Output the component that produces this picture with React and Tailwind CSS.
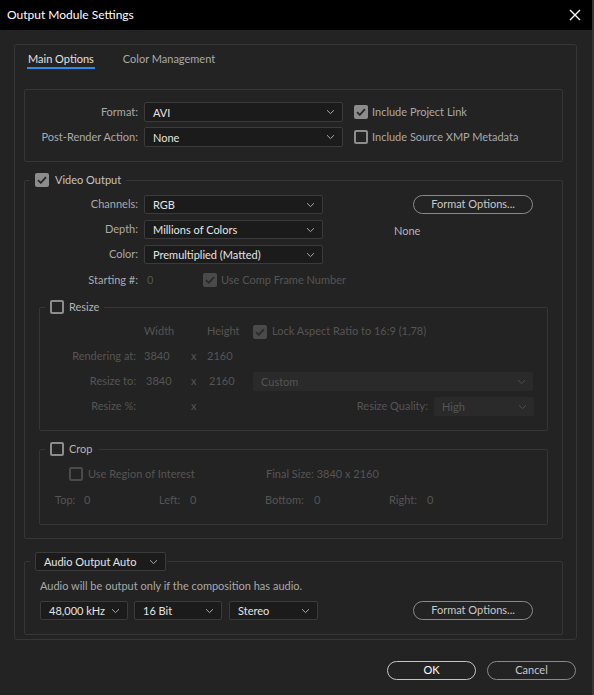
import React from 'react'

const font = { fontFamily: 'Lato, "Noto Sans", sans-serif' }

function Chevron({ dim }){
  return (
    <svg width="9" height="6" viewBox="0 0 9 6" className="shrink-0">
      <path d="M1 1.2 L4.5 4.6 L8 1.2" fill="none" stroke={dim ? '#4e4e4e' : '#a8a8a8'} strokeWidth="1" />
    </svg>
  )
}

function Select({ value, className = '', disabled }){
  return (
    <div className={`flex items-center justify-between h-[19px] rounded-[2px] pl-[8px] pr-[7px] shrink-0 ${disabled ? 'bg-[#2a2a2a] text-[#555555]' : 'bg-[#1b1b1b] border border-[#3b3b3b] text-[#e4e4e4]'} ${className}`}>
      <span className="leading-none">{value}</span>
      <Chevron dim={disabled} />
    </div>
  )
}

function Check({ checked, disabled }){
  if (checked) {
    return (
      <div className={`w-[14px] h-[14px] rounded-[2px] flex items-center justify-center shrink-0 ${disabled ? 'bg-[#4a4a4a]' : 'bg-[#8c8c8c]'}`}>
        <svg width="10" height="8" viewBox="0 0 10 8">
          <path d="M1 4.2 L3.8 6.8 L9 1.2" fill="none" stroke={disabled ? '#2a2a2a' : '#262626'} strokeWidth="1.8" />
        </svg>
      </div>
    )
  }
  return <div className={`w-[14px] h-[14px] rounded-[2px] border-2 shrink-0 ${disabled ? 'border-[#4a4a4a]' : 'border-[#8c8c8c]'}`} />
}

function PillButton({ children, className = '' }){
  return (
    <div className={`h-[19px] rounded-full border border-[#8a8a8a] flex items-center justify-center shrink-0 text-[#c8c8c8] ${className}`}>
      {children}
    </div>
  )
}

export default function App(){
  return (
    <div className="w-[594px] h-[695px] bg-[#232323] text-[11px] text-[#a9a9a9] flex flex-col border-r-2 border-[#353535]" style={font}>
      {/* title bar */}
      <div className="h-[30px] bg-black flex items-center justify-between pl-[7px] pr-[11px] shrink-0">
        <span className="text-white text-[12px]">Output Module Settings</span>
        <svg width="12" height="12" viewBox="0 0 12 12">
          <path d="M1 1 L11 11 M11 1 L1 11" stroke="#ffffff" strokeWidth="1.4" />
        </svg>
      </div>

      <div className="pl-[14px] pt-[14px]">
        <div className="w-[563px] border border-[#363636] rounded-[3px] pl-[9px] pr-[13px] pb-[4px]">
          {/* tabs */}
          <div className="flex pt-[6px] pl-[3px]">
            <div className="flex flex-col">
              <span className="h-[16px] leading-[16px] px-[1px] text-[#e0e0e0]">Main Options</span>
              <div className="h-[2px] bg-[#2d8ceb]" />
            </div>
            <span className="ml-[28px] h-[16px] leading-[16px] text-[#a9a9a9]">Color Management</span>
          </div>

          {/* format box */}
          <div className="mt-[20px] border border-[#363636] rounded-[2px] pt-[12px] pb-[14px] flex flex-col gap-[5px]">
            <div className="flex items-center h-[20px]">
              <span className="w-[113px] shrink-0 text-right">Format:</span>
              <Select value="AVI" className="ml-[6px] w-[199px] h-[20px]" />
              <div className="ml-[11px] flex items-center gap-[4px]">
                <Check checked />
                <span>Include Project Link</span>
              </div>
            </div>
            <div className="flex items-center h-[20px]">
              <span className="w-[113px] shrink-0 text-right">Post-Render Action:</span>
              <Select value="None" className="ml-[6px] w-[199px] h-[20px]" />
              <div className="ml-[11px] flex items-center gap-[4px]">
                <Check />
                <span>Include Source XMP Metadata</span>
              </div>
            </div>
          </div>

          {/* video output */}
          <fieldset className="mt-[10px] border border-[#363636] rounded-[2px] pb-[13px]">
            <legend className="ml-[5px] px-[5px] flex items-center gap-[6px] h-[16px]">
              <Check checked />
              <span className="text-[#c4c4c4]">Video Output</span>
            </legend>
            <div className="pt-[7px] flex">
              <div className="w-[298px] shrink-0 flex flex-col gap-[6px]">
                <div className="flex items-center">
                  <span className="w-[113px] shrink-0 text-right">Channels:</span>
                  <Select value="RGB" className="ml-[6px] w-[179px]" />
                </div>
                <div className="flex items-center">
                  <span className="w-[113px] shrink-0 text-right">Depth:</span>
                  <Select value="Millions of Colors" className="ml-[6px] w-[179px]" />
                </div>
                <div className="flex items-center">
                  <span className="w-[113px] shrink-0 text-right">Color:</span>
                  <Select value="Premultiplied (Matted)" className="ml-[6px] w-[179px]" />
                </div>
                <div className="flex items-center h-[16px] mt-[2px] whitespace-nowrap">
                  <span className="w-[113px] shrink-0 text-right">Starting #:</span>
                  <span className="ml-[9px] w-[56px] shrink-0 text-[#555555]">0</span>
                  <Check checked disabled />
                  <span className="ml-[4px] shrink-0 text-[#555555]">Use Comp Frame Number</span>
                </div>
              </div>
              <div className="ml-[71px] flex flex-col">
                <PillButton className="ml-[19px] w-[120px]">Format Options...</PillButton>
                <span className="mt-[9px] text-[#b4b4b4]">None</span>
              </div>
            </div>

            {/* resize */}
            <fieldset className="mt-[11px] mx-[14px] border border-[#363636] rounded-[2px] pb-[14px]">
              <legend className="ml-[5px] px-[5px] flex items-center gap-[5px] h-[16px]">
                <Check />
                <span className="text-[#b4b4b4]">Resize</span>
              </legend>
              <div className="pt-[7px] flex flex-col gap-[6px] text-[#555555]">
                <div className="flex items-center h-[19px]">
                  <span className="w-[96px] shrink-0" />
                  <span className="ml-[8px] w-[63px] shrink-0">Width</span>
                  <span className="w-[46px] shrink-0">Height</span>
                  <Check checked disabled />
                  <span className="ml-[5px]">Lock Aspect Ratio to 16:9 (1,78)</span>
                </div>
                <div className="flex items-center h-[19px]">
                  <span className="w-[96px] shrink-0 text-right">Rendering at:</span>
                  <span className="ml-[8px] w-[47px] shrink-0">3840</span>
                  <span className="w-[16px] shrink-0">x</span>
                  <span className="w-[46px] shrink-0">2160</span>
                </div>
                <div className="flex items-center h-[19px]">
                  <span className="w-[96px] shrink-0 text-right">Resize to:</span>
                  <span className="ml-[8px] w-[47px] shrink-0 pl-[2px]">3840</span>
                  <span className="w-[16px] shrink-0">x</span>
                  <span className="w-[46px] shrink-0 pl-[2px]">2160</span>
                  <Select value="Custom" disabled className="w-[280px]" />
                </div>
                <div className="flex items-center h-[19px]">
                  <span className="w-[96px] shrink-0 text-right">Resize %:</span>
                  <span className="ml-[8px] w-[47px] shrink-0" />
                  <span className="w-[16px] shrink-0">x</span>
                  <span className="flex-1 text-right">Resize Quality:</span>
                  <Select value="High" disabled className="ml-[6px] w-[100px] mr-[13px]" />
                </div>
              </div>
            </fieldset>

            {/* crop */}
            <fieldset className="mt-[10px] mx-[14px] border border-[#363636] rounded-[2px] pb-[16px]">
              <legend className="ml-[5px] px-[5px] flex items-center gap-[5px] h-[16px]">
                <Check />
                <span className="text-[#b4b4b4]">Crop</span>
              </legend>
              <div className="pt-[9px] flex flex-col gap-[10px] text-[#555555]">
                <div className="flex items-center h-[16px] pl-[29px]">
                  <Check disabled />
                  <span className="ml-[5px] w-[178px] shrink-0">Use Region of Interest</span>
                  <span>Final Size: 3840 x 2160</span>
                </div>
                <div className="flex items-center h-[16px] pl-[15px]">
                  <span className="w-[29px] shrink-0">Top:</span>
                  <span className="w-[75px] shrink-0">0</span>
                  <span className="w-[31px] shrink-0">Left:</span>
                  <span className="w-[75px] shrink-0">0</span>
                  <span className="w-[49px] shrink-0">Bottom:</span>
                  <span className="w-[75px] shrink-0">0</span>
                  <span className="w-[38px] shrink-0">Right:</span>
                  <span>0</span>
                </div>
              </div>
            </fieldset>
          </fieldset>

          {/* audio */}
          <fieldset className="mt-[13px] border border-[#363636] rounded-[2px] pb-[14px]">
            <legend className="ml-[5px] pl-[5px] pr-[1px]">
              <Select value="Audio Output Auto" className="w-[131px]" />
            </legend>
            <div className="pt-[7px] pl-[15px] flex flex-col">
              <span className="h-[16px] leading-[16px]">Audio will be output only if the composition has audio.</span>
              <div className="mt-[7px] flex items-center">
                <Select value="48,000 kHz" className="w-[88px]" />
                <Select value="16 Bit" className="ml-[6px] w-[88px]" />
                <Select value="Stereo" className="ml-[7px] w-[89px]" />
                <PillButton className="ml-[95px] w-[120px]">Format Options...</PillButton>
              </div>
            </div>
          </fieldset>
        </div>
      </div>

      {/* buttons */}
      <div className="mt-[21px] flex justify-end gap-[11px] pr-[16px]">
        <PillButton className="w-[89px] border-[#c4c4c4] text-white">OK</PillButton>
        <PillButton className="w-[89px] text-[#a9a9a9]">Cancel</PillButton>
      </div>
    </div>
  )
}
